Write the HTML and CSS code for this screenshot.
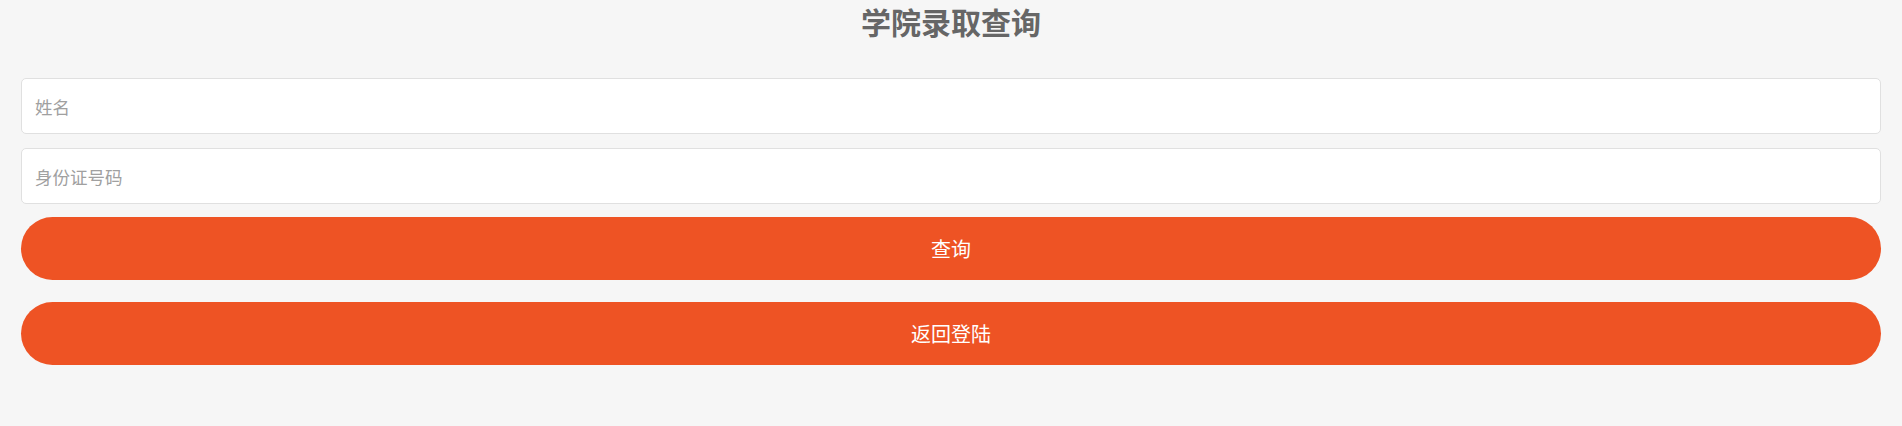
FILE: index.html
```html
<!DOCTYPE html>
<html lang="zh">
<head>
<meta charset="utf-8">
<title>学院录取查询</title>
<link rel="stylesheet" href="styles.css">
</head>
<body>
<div class="page">
  <h1 class="title">学院录取查询</h1>
  <form class="form">
    <input class="field" type="text" placeholder="姓名">
    <input class="field field-second" type="text" placeholder="身份证号码">
    <button class="btn btn-query" type="button">查询</button>
    <button class="btn btn-back" type="button">返回登陆</button>
  </form>
</div>
</body>
</html>
```

FILE: styles.css
```css
html, body {
  margin: 0;
  padding: 0;
  background: #f6f6f6;
}
body {
  font-family: "Noto Sans CJK SC", "Noto Sans", sans-serif;
}
.page {
  padding: 0 21px;
}
.title {
  margin: 0;
  height: 44px;
  line-height: 42px;
  text-align: center;
  font-size: 30px;
  font-weight: 700;
  color: #666666;
}
.form {
  display: flex;
  flex-direction: column;
  margin-top: 34px;
}
.field {
  box-sizing: border-box;
  height: 56px;
  width: 100%;
  margin: 0;
  padding: 0 13px;
  border: 1px solid #e0e0e0;
  border-radius: 5px;
  background: #ffffff;
  font-family: inherit;
  font-size: 17.5px;
  color: #333;
  outline: none;
}
.field::placeholder {
  color: #a0a0a0;
}
.field-second {
  margin-top: 14px;
}
.btn {
  box-sizing: border-box;
  height: 63px;
  width: 100%;
  border: none;
  border-radius: 32px;
  background: #ee5324;
  color: #ffffff;
  font-family: inherit;
  font-size: 20px;
  padding: 0;
}
.btn-query {
  margin-top: 13px;
}
.btn-back {
  margin-top: 22px;
}
```
